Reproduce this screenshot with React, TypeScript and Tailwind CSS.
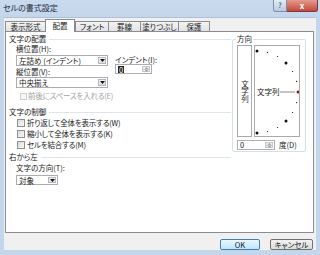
import React from "react";

const tabs = ["表示形式", "配置", "フォント", "罫線", "塗りつぶし", "保護"];
const tabWidths = ["w-[40px]", "w-[30px]", "w-[33px]", "w-[32px]", "w-[38px]", "w-[32px]"];

function Arrow() {
  return (
    <svg width="5" height="3" viewBox="0 0 5 3">
      <path d="M0 0h5L2.5 3z" fill="#111" />
    </svg>
  );
}

function Select({ text, className }: { text: string; className: string }) {
  return (
    <div className={`flex items-stretch border border-[#abadb3] bg-white ${className}`}>
      <span className="flex-1 pl-[2px] leading-[9px] whitespace-nowrap">{text}</span>
      <div className="m-px w-[8px] flex items-center justify-center border border-[#b3b6bd] bg-gradient-to-b from-[#f6f6f6] to-[#dedede]">
        <Arrow />
      </div>
    </div>
  );
}

function Spin({ children, className }: { children: React.ReactNode; className: string }) {
  return (
    <div className={`flex items-stretch border border-[#abadb3] bg-white ${className}`}>
      <div className="flex-1 pl-[2px] flex items-center">{children}</div>
      <div className="m-px w-[8px] flex flex-col border border-[#c4c7cc] bg-[#ececec]">
        <div className="flex-1 flex items-center justify-center">
          <svg width="3" height="2" viewBox="0 0 3 2"><path d="M0 2h3L1.5 0z" fill="#9a9a9a" /></svg>
        </div>
        <div className="flex-1 flex items-center justify-center border-t border-[#c4c7cc]">
          <svg width="3" height="2" viewBox="0 0 3 2"><path d="M0 0h3L1.5 2z" fill="#9a9a9a" /></svg>
        </div>
      </div>
    </div>
  );
}

function Heading({ text }: { text: string }) {
  return (
    <div className="flex items-center gap-[3px] h-[8px] leading-[8px]">
      <span className="whitespace-nowrap">{text}</span>
      <div className="flex-1 h-px bg-[#dde4ec]" />
    </div>
  );
}

function Check({ label, disabled }: { label: string; disabled?: boolean }) {
  return (
    <div className={`flex items-center h-[8px] leading-[8px] ${disabled ? "pl-[11px] gap-[1px] text-[#a3a3a3]" : "pl-[8px] gap-[2px]"}`}>
      <div
        className={
          disabled
            ? "w-[7px] h-[7px] border border-[#cfcfcf] bg-[#f7f7f7]"
            : "w-[8px] h-[8px] border border-[#8e8f8f] bg-gradient-to-br from-[#dadada] to-[#fafafa]"
        }
      />
      <span className="whitespace-nowrap tracking-[-0.2px]">{label}</span>
    </div>
  );
}

function Dial() {
  const cx = 3;
  const cy = 47;
  const r = 41;
  const dots = [];
  for (let a = -90; a <= 90; a += 15) {
    const t = (a * Math.PI) / 180;
    const x = cx + r * Math.cos(t);
    const y = cy + r * Math.sin(t);
    const big = a % 45 === 0;
    dots.push(
      <circle key={a} cx={x} cy={y} r={big ? 1.5 : 0.6} fill={a === 0 ? "#8b1a1a" : "#111"} />
    );
  }
  return (
    <svg width="44" height="90" viewBox="1 1 44 90">
      {dots}
      <line x1="26" y1="47" x2="41" y2="47" stroke="#8a8a8a" strokeWidth="1" />
      <text x="3" y="50" fontSize="7.5" fontFamily="Noto Sans CJK JP, sans-serif" fill="#111">文字列</text>
    </svg>
  );
}

export default function App() {
  return (
    <div className="w-[320px] h-[255px] bg-[#c4d6ec] flex flex-col pb-[5px] overflow-hidden text-[7.5px] text-[#1a1a1a] font-['Noto_Sans_CJK_JP',sans-serif] [font-feature-settings:'palt']">
      {/* title bar */}
      <div className="h-[17px] flex items-start bg-gradient-to-b from-[#c9daee] to-[#c4d6ec]">
        <span className="pl-[3px] pt-[3px] leading-[9px] text-[8px] text-[#1b2a3a]">セルの書式設定</span>
        <div className="ml-auto mr-[2px] flex">
          <div className="w-[14px] h-[12px] flex items-center justify-center rounded-bl-[3px] border border-t-0 border-[#7c8fa8] bg-gradient-to-b from-[#e2ebf5] to-[#b9cbe0] text-[7px] text-[#2a3a55]">?</div>
          <div className="w-[31px] h-[12px] flex items-center justify-center rounded-br-[3px] border border-t-0 border-l-0 border-[#7a3a3a] bg-gradient-to-b from-[#e29a8d] to-[#c4473b] text-[8px] text-white font-bold">x</div>
        </div>
      </div>

      {/* dialog body */}
      <div className="mx-[4px] flex-1 bg-[#f0f0f0] flex flex-col border-t border-[#aebfd6]">
        {/* tabs */}
        <div className="h-[13px] pl-[1px] flex items-end">
          {tabs.map((t, i) => {
            const sel = i === 1;
            return (
              <div
                key={t}
                className={`${tabWidths[i]} flex items-center justify-center border-t border-l border-[#898c95] leading-[8px] whitespace-nowrap ${
                  sel
                    ? "h-[13px] -mb-px bg-white border-r relative z-10"
                    : `h-[10px] bg-gradient-to-b from-[#f3f3f3] to-[#e3e3e3] ${i === 5 ? "border-r" : ""}`
                }`}
              >
                {t}
              </div>
            );
          })}
        </div>

        {/* panel */}
        <div className="ml-[1px] w-[309px] h-[202px] border border-[#898c95] bg-white flex">
          {/* left column */}
          <div className="pl-[3px] pt-[3px] w-[225px] flex flex-col">
            <Heading text="文字の配置" />
            <div className="mt-[2px] pl-[7px] flex">
              <div className="w-[92px] flex flex-col">
                <span className="h-[8px] leading-[8px]">横位置(H):</span>
                <Select text="左詰め (インデント)" className="mt-[2px] h-[11px]" />
                <span className="mt-[2px] h-[8px] leading-[8px]">縦位置(V):</span>
                <Select text="中央揃え" className="mt-[1px] h-[11px]" />
              </div>
              <div className="ml-[7px] mt-[11px] flex flex-col">
                <span className="h-[8px] leading-[8px] whitespace-nowrap">インデント(I):</span>
                <Spin className="w-[37px] h-[10px]">
                  <span className="bg-[#222] text-white leading-[7px] px-px">0</span>
                </Spin>
              </div>
            </div>
            <div className="mt-[4px]">
              <Check label="前後にスペースを入れる(E)" disabled />
            </div>
            <div className="mt-[8px]">
              <Heading text="文字の制御" />
            </div>
            <div className="mt-[3px]">
              <Check label="折り返して全体を表示する(W)" />
            </div>
            <div className="mt-[3px]">
              <Check label="縮小して全体を表示する(K)" />
            </div>
            <div className="mt-[3px]">
              <Check label="セルを結合する(M)" />
            </div>
            <div className="mt-[4px]">
              <Heading text="右から左" />
            </div>
            <span className="mt-[3px] pl-[7px] h-[8px] leading-[8px]">文字の方向(T):</span>
            <div className="mt-[3px] pl-[7px]">
              <Select text="対象" className="w-[42px] h-[10px]" />
            </div>
          </div>

          {/* orientation group */}
          <div className="mt-[3px] ml-[1px]">
            <fieldset className="w-[74px] h-[117px] border border-[#d5dfe5] rounded-[2px]">
              <legend className="ml-[3px] px-px leading-[8px]">方向</legend>
              <div className="pl-[4px] mt-[2px] flex gap-[2px]">
                <div className="w-[15px] h-[92px] border border-[#a9a9a9] flex items-center justify-center">
                  <span className="[writing-mode:vertical-rl] leading-[8px]">文字列</span>
                </div>
                <div className="w-[46px] h-[92px] border border-[#a9a9a9]">
                  <Dial />
                </div>
              </div>
              <div className="pl-[4px] mt-[3px] flex items-center">
                <Spin className="w-[38px] h-[10px]">
                  <span className="leading-[8px]">0</span>
                </Spin>
                <span className="ml-[4px] leading-[8px]">度(D)</span>
              </div>
            </fieldset>
          </div>
        </div>

        {/* buttons */}
        <div className="mt-[6px] mr-[3px] flex justify-end gap-[10px]">
          <div className="w-[40px] h-[11px] flex items-center justify-center rounded-[2px] border border-[#3c7fb1] bg-gradient-to-b from-[#eaf6fd] to-[#bee6fd] leading-[8px]">OK</div>
          <div className="w-[43px] h-[11px] flex items-center justify-center rounded-[2px] border border-[#707070] bg-gradient-to-b from-[#f2f2f2] to-[#dcdcdc] leading-[8px]">キャンセル</div>
        </div>
      </div>
    </div>
  );
}
